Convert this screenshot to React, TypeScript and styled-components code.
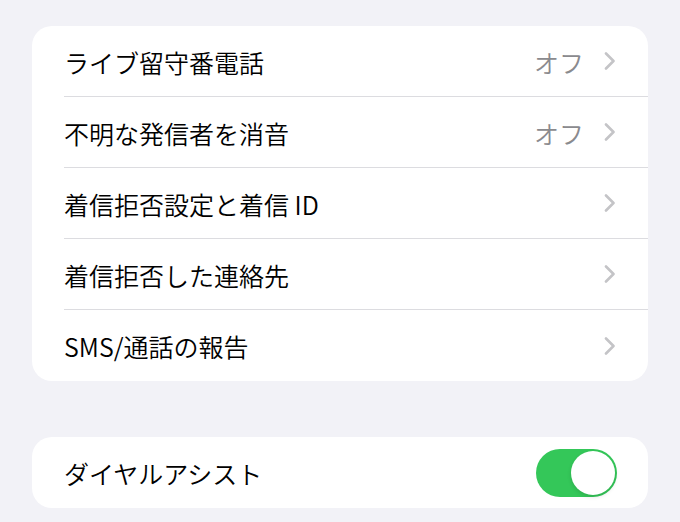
import React from "react";
import styled, { createGlobalStyle } from "styled-components";

const Global = createGlobalStyle`
  html, body { margin: 0; padding: 0; background: #F2F2F7; }
  body { font-family: "Noto Sans CJK JP", "Noto Sans", sans-serif; -webkit-font-smoothing: antialiased; }
`;

const Page = styled.div`
  width: 680px;
  height: 522px;
  box-sizing: border-box;
  padding: 26px 32px 0 32px;
  display: flex;
  flex-direction: column;
  gap: 56px;
  overflow: hidden;
`;

const Card = styled.div`
  background: #fff;
  border-radius: 20px;
  overflow: hidden;
  display: flex;
  flex-direction: column;
`;

const Row = styled.div<{ $last?: boolean }>`
  height: 71px;
  margin-left: 32px;
  padding-right: 32px;
  box-sizing: border-box;
  display: flex;
  align-items: center;
  border-bottom: ${(p) => (p.$last ? "none" : "1px solid #DCDCE0")};
`;

const Label = styled.div`
  flex: 1;
  font-size: 25px;
  font-weight: 350;
  color: #000;
  padding-top: 1px;
`;

const Value = styled.div`
  font-size: 25px;
  font-weight: 350;
  color: #8A8A8E;
  margin-right: 20px;
  padding-top: 1px;
`;

const Chevron = () => (
  <svg width="12" height="18" viewBox="0 0 12 18" style={{ display: "block" }}>
    <path d="M2 1.5 L9.5 9 L2 16.5" fill="none" stroke="#C4C4C7" strokeWidth="2.6" strokeLinecap="round" strokeLinejoin="round" />
  </svg>
);

const Toggle = styled.div`
  width: 81px;
  height: 48px;
  border-radius: 24px;
  background: #34C759;
  margin-right: -1px;
  display: flex;
  align-items: center;
  justify-content: flex-end;
  padding: 2px;
  box-sizing: border-box;
`;

const Knob = styled.div`
  width: 44px;
  height: 44px;
  border-radius: 50%;
  background: #fff;
  box-shadow: 0 2px 4px rgba(0, 0, 0, 0.12);
`;

const rows: { label: string; value?: string }[] = [
  { label: "ライブ留守番電話", value: "オフ" },
  { label: "不明な発信者を消音", value: "オフ" },
  { label: "着信拒否設定と着信 ID" },
  { label: "着信拒否した連絡先" },
  { label: "SMS/通話の報告" },
];

export default function App() {
  return (
    <>
      <Global />
      <Page>
        <Card>
          {rows.map((r, i) => (
            <Row key={r.label} $last={i === rows.length - 1}>
              <Label>{r.label}</Label>
              {r.value && <Value>{r.value}</Value>}
              <Chevron />
            </Row>
          ))}
        </Card>
        <Card>
          <Row $last>
            <Label>ダイヤルアシスト</Label>
            <Toggle>
              <Knob />
            </Toggle>
          </Row>
        </Card>
      </Page>
    </>
  );
}
